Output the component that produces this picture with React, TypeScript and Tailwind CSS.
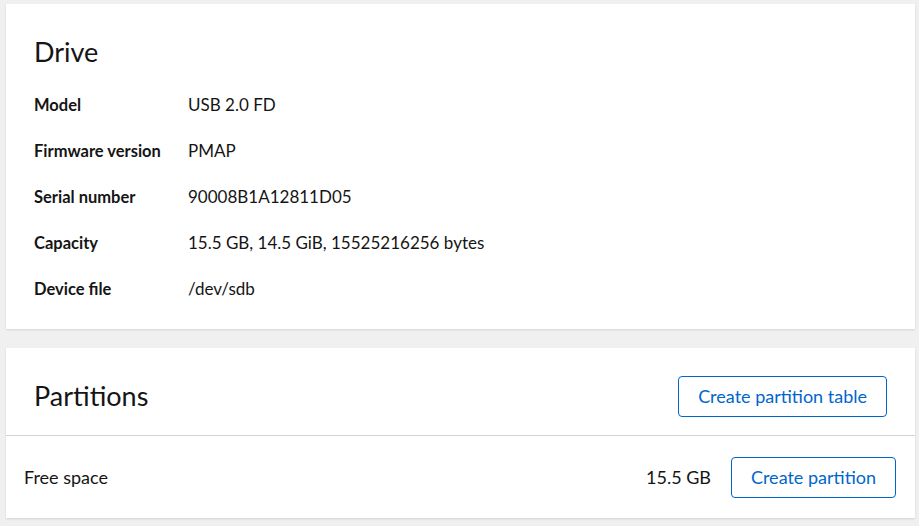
import React from 'react'

const FONT = "font-['Lato','Noto_Sans',sans-serif]"

const DRIVE_ROWS: [string, string][] = [
  ['Model', 'USB 2.0 FD'],
  ['Firmware version', 'PMAP'],
  ['Serial number', '90008B1A12811D05'],
  ['Capacity', '15.5 GB, 14.5 GiB, 15525216256 bytes'],
  ['Device file', '/dev/sdb'],
]

function OutlineButton({ children }: { children: React.ReactNode }) {
  return (
    <button
      type="button"
      className="flex h-[41px] items-center rounded-[4px] border border-[#0066cc] bg-white px-[19px] text-[18px] text-[#0066cc]"
    >
      {children}
    </button>
  )
}

export default function App() {
  return (
    <div className={`min-h-[526px] w-full bg-[#f0f0f0] pl-[6px] pr-[4px] pt-[4px] text-[#151515] ${FONT}`}>
      {/* Drive card */}
      <section className="bg-white px-[28px] pb-[17px] pt-[31px] shadow-[0_1px_2px_rgba(0,0,0,0.12)]">
        <h2 className="text-[27px] leading-[34px]">Drive</h2>
        <dl className="mt-[13px] flex flex-col">
          {DRIVE_ROWS.map(([label, value]) => (
            <div key={label} className="flex h-[46px] items-center">
              <dt className="w-[154px] shrink-0 text-[16.5px] font-bold">{label}</dt>
              <dd className="text-[17px]">{value}</dd>
            </div>
          ))}
        </dl>
      </section>

      {/* Partitions card */}
      <section className="mt-[19px] bg-white shadow-[0_1px_2px_rgba(0,0,0,0.12)]">
        <div className="flex h-[88px] items-center justify-between border-b border-[#d2d2d2] pl-[28px] pr-[28px] pt-[10px]">
          <h2 className="text-[27px]">Partitions</h2>
          <OutlineButton>Create partition table</OutlineButton>
        </div>
        <div className="flex h-[82px] items-center pl-[18px] pr-[19px]">
          <span className="flex-1 text-[18px]">Free space</span>
          <span className="mr-[20px] text-[18px]">15.5 GB</span>
          <OutlineButton>Create partition</OutlineButton>
        </div>
      </section>
    </div>
  )
}
